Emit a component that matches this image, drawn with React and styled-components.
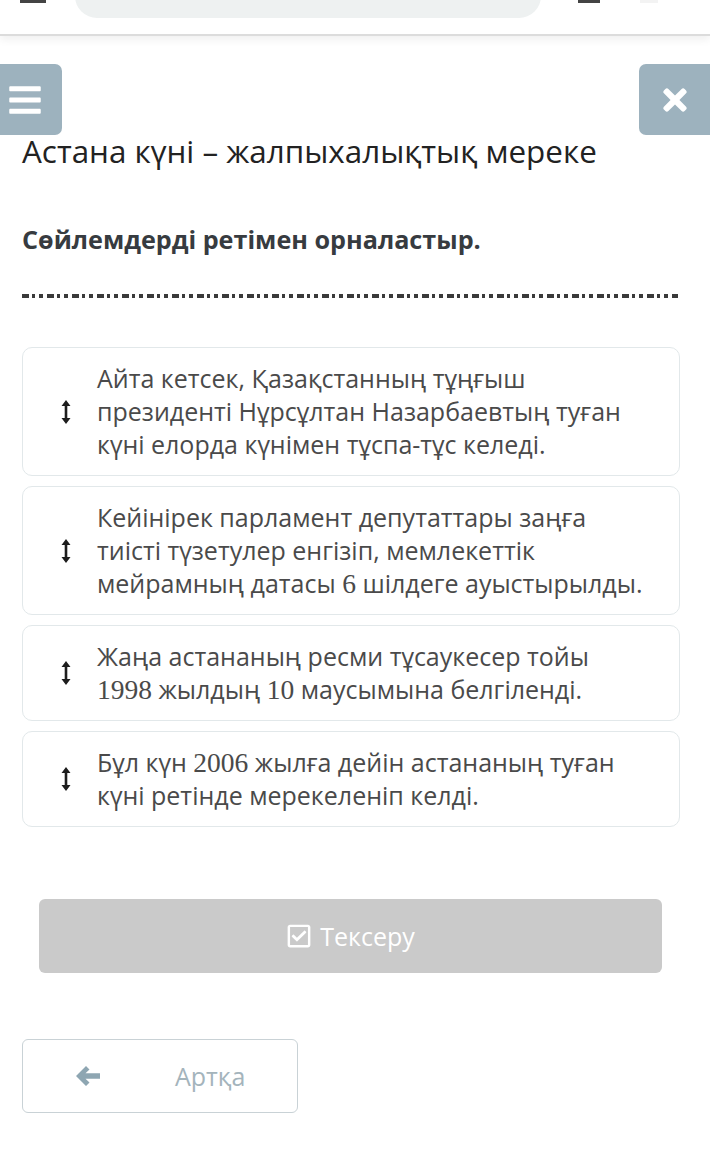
import styled, { createGlobalStyle } from "styled-components";
import { FaBars, FaTimes, FaRegCheckSquare } from "react-icons/fa";

const GlobalStyle = createGlobalStyle`
  body {
    margin: 0;
    background: #fff;
    font-family: "Open Sans", "Noto Sans", sans-serif;
  }
`;

// lines are broken as in the original layout
const items = [
  ["Айта кетсек, Қазақстанның тұңғыш\nпрезиденті Нұрсұлтан Назарбаевтың туған\nкүні елорда күнімен тұспа-тұс келеді."],
  ["Кейінірек парламент депутаттары заңға\nтиісті түзетулер енгізіп, мемлекеттік\nмейрамның датасы ", 6, " шілдеге ауыстырылды."],
  ["Жаңа астананың ресми тұсаукесер тойы\n", 1998, " жылдың ", 10, " маусымына белгіленді."],
  ["Бұл күн ", 2006, " жылға дейін астананың туған\nкүні ретінде мерекеленіп келді."],
];

function SortIcon() {
  return (
    <svg width="10" height="24" viewBox="0 0 10 24">
      <path d="M5 0 L9.5 6 L6.3 6 L6.3 18 L9.5 18 L5 24 L0.5 18 L3.7 18 L3.7 6 L0.5 6 Z" fill="#1d1d1d" />
    </svg>
  );
}

function LeftArrow() {
  return (
    <svg width="26" height="22" viewBox="0 0 26 22">
      <path d="M11 1 L1 11 L11 21 L14.5 17.5 L10.5 13.8 L25 13.8 L25 8.2 L10.5 8.2 L14.5 4.5 Z" fill="#8ea6b2" />
    </svg>
  );
}

function App() {
  return (
    <Page>
      <GlobalStyle />
      <BrowserBar>
        <ChromeMark $w={26} />
        <AddressPill>
          <UrlText>wordwall.net/play/5243/841/284</UrlText>
        </AddressPill>
        <ChromeMark $w={22} />
        <ChromeMark $w={18} $light />
      </BrowserBar>

      <HeaderRow>
        <SquareBtn $side="left">
          <FaBars />
        </SquareBtn>
        <SquareBtn $side="right">
          <FaTimes />
        </SquareBtn>
      </HeaderRow>

      <Content>
        <Title>Астана күні – жалпыхалықтық мереке</Title>
        <Instruction>Сөйлемдерді ретімен орналастыр.</Instruction>
        <DashLine />

        <List>
          {items.map((parts, i) => (
            <Card key={i}>
              <Handle>
                <SortIcon />
              </Handle>
              <CardText>
                {parts.map((p, j) =>
                  typeof p === "number" ? <Num key={j}>{p}</Num> : <span key={j}>{p}</span>
                )}
              </CardText>
            </Card>
          ))}
        </List>

        <CheckBtn>
          <FaRegCheckSquare />
          <span>Тексеру</span>
        </CheckBtn>

        <BackBtn>
          <BackArrow>
            <LeftArrow />
          </BackArrow>
          <span>Артқа</span>
        </BackBtn>
      </Content>
    </Page>
  );
}

const Page = styled.div`
  width: 710px;
  min-height: 1156px;
  overflow: hidden;
`;

const BrowserBar = styled.div`
  height: 36px;
  display: flex;
  align-items: flex-end;
  padding: 0 0 16px 20px;
  box-sizing: border-box;
  overflow: hidden;
  border-bottom: 2px solid #dcdcdc;
  box-shadow: 0 4px 8px rgba(0, 0, 0, 0.06);
  background: #fff;
`;

const ChromeMark = styled.div`
  width: ${(p) => p.$w}px;
  height: 3px;
  background: ${(p) => (p.$light ? "#f3f3f3" : "#444")};
  align-self: flex-start;
  margin-right: ${(p) => (p.$w === 26 ? 29 : 40)}px;
`;

const AddressPill = styled.div`
  flex: none;
  width: 466px;
  height: 44px;
  margin-right: 37px;
  border-radius: 22px;
  background: #eef1f1;
  display: flex;
  align-items: flex-start;
  justify-content: center;
  overflow: hidden;
`;

const UrlText = styled.div`
  margin-top: -12px;
  font-family: "Roboto", sans-serif;
  font-size: 20px;
  line-height: 24px;
  color: #333;
`;

const HeaderRow = styled.div`
  display: flex;
  justify-content: space-between;
  margin-top: 28px;
`;

const SquareBtn = styled.div`
  width: ${(p) => (p.$side === "left" ? 62 : 71)}px;
  height: 71px;
  background: #9db2be;
  border-radius: ${(p) => (p.$side === "left" ? "0 7px 7px 0" : "7px 0 0 7px")};
  display: flex;
  align-items: center;
  justify-content: ${(p) => (p.$side === "left" ? "flex-start" : "center")};
  padding-left: ${(p) => (p.$side === "left" ? "7px" : "0")};
  box-sizing: border-box;
  color: #fff;
  svg {
    width: ${(p) => (p.$side === "left" ? 36 : 34)}px;
    height: ${(p) => (p.$side === "left" ? 36 : 34)}px;
  }
`;

const Content = styled.div`
  padding: 0 30px 0 22px;
`;

const Title = styled.h1`
  margin: -5px 0 0;
  font-weight: 400;
  font-size: 31.4px;
  line-height: 42px;
  color: #222;
`;

const Instruction = styled.h2`
  margin: 51px 0 0;
  font-weight: 700;
  font-size: 25.2px;
  line-height: 32px;
  color: #373b40;
`;

const DashLine = styled.div`
  margin-top: 39px;
  width: 656px;
  height: 4px;
  background: repeating-linear-gradient(
    90deg,
    #3a3a3a 0 7px,
    transparent 7px 10px,
    #3a3a3a 10px 13px,
    transparent 13px 17px,
    #3a3a3a 17px 21px,
    transparent 21px 25px
  );
`;

const List = styled.div`
  margin-top: 49px;
  width: 658px;
  display: flex;
  flex-direction: column;
  gap: 10px;
`;

const Card = styled.div`
  display: flex;
  align-items: center;
  min-height: 95px;
  padding: 14px 10px 14px 0;
  box-sizing: border-box;
  border: 1px solid #e2e8ea;
  border-radius: 10px;
  background: #fff;
`;

const Handle = styled.div`
  flex: none;
  width: 74px;
  display: flex;
  justify-content: center;
  padding-left: 12px;
  box-sizing: border-box;
`;

const CardText = styled.div`
  flex: 1;
  white-space: pre-line;
  font-size: 25px;
  line-height: 33px;
  color: #4a4a4a;
`;

const Num = styled.span`
  font-family: "Liberation Serif", serif;
  font-size: 27.5px;
  line-height: 1;
`;

const CheckBtn = styled.div`
  margin: 72px 0 0 17px;
  width: 623px;
  height: 74px;
  border-radius: 6px;
  background: #cacaca;
  color: #fff;
  display: flex;
  align-items: center;
  justify-content: center;
  gap: 8px;
  font-size: 25px;
  svg {
    width: 26px;
    height: 26px;
  }
`;

const BackBtn = styled.div`
  margin-top: 66px;
  width: 276px;
  height: 74px;
  box-sizing: border-box;
  border: 1px solid #c9d2d6;
  border-radius: 6px;
  display: flex;
  align-items: center;
  font-size: 25px;
  color: #a4b4bc;
  span {
    margin-left: 74px;
  }
`;

const BackArrow = styled.div`
  margin-left: 52px;
  display: flex;
`;

export default App;
